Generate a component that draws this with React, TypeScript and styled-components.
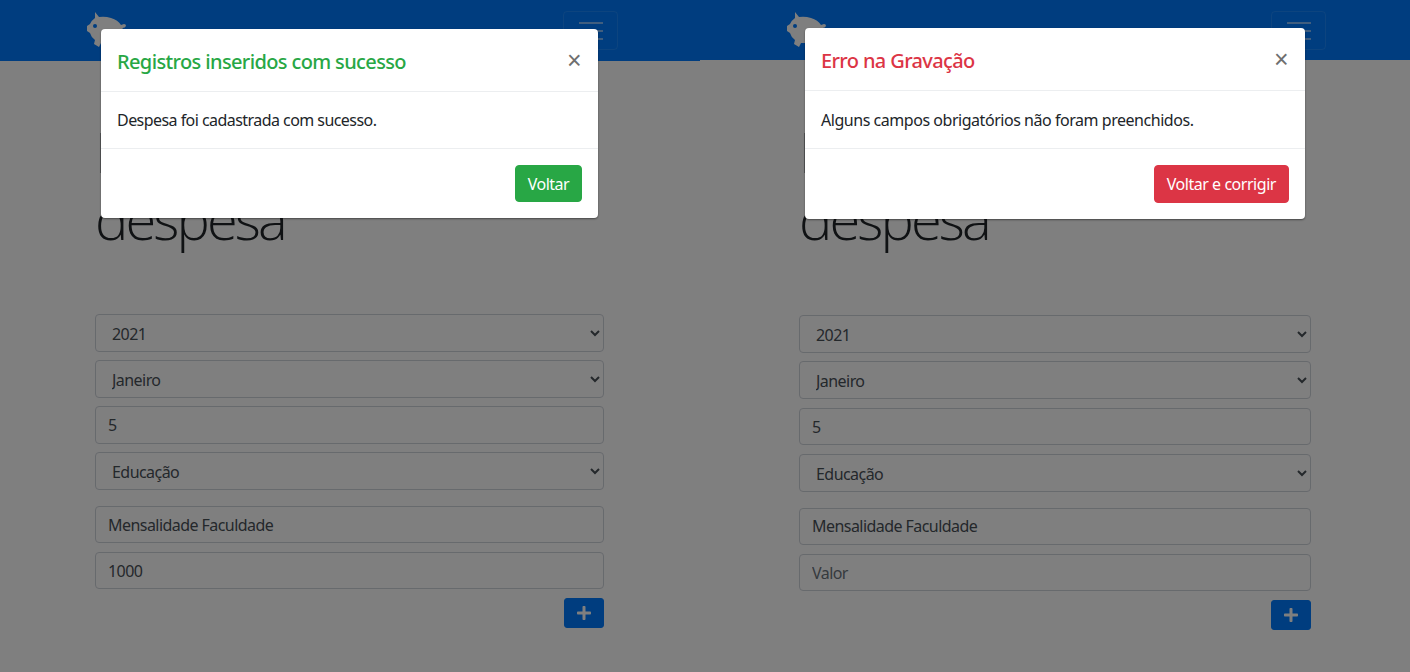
import * as React from 'react';
import styled, { createGlobalStyle } from 'styled-components';
import { FaPlus } from 'react-icons/fa';

const GlobalStyle = createGlobalStyle`
    html,
    body {
        margin: 0;
        padding: 0;
        background: #fff;
        overflow: hidden;
    }

    * {
        box-sizing: border-box;
    }
`;

const fontStack = `'Noto Sans', 'Open Sans', sans-serif`;

const Screens = styled.div`
    display: grid;
    grid-template-columns: 700px 710px;
    width: 1410px;
    height: 672px;
    font-family: ${fontStack};
    font-size: 16px;
    letter-spacing: -0.55px;
    color: #212529;
`;

const Screen = styled.section`
    position: relative;
    height: 672px;
    overflow: hidden;
`;

const Backdrop = styled.div`
    position: absolute;
    inset: 0;
    background: #000;
    opacity: 0.5;
`;

const NavBar = styled.nav<{ $pad: number; $height: number }>`
    display: flex;
    align-items: flex-start;
    justify-content: space-between;
    height: ${(p) => p.$height}px;
    padding: 11px ${(p) => p.$pad}px 0 86px;
    background: #007bff;
`;

const Logo = styled.svg`
    display: block;
    width: 41px;
    height: 38px;
`;

const Toggler = styled.button`
    display: flex;
    flex-direction: column;
    align-items: center;
    justify-content: center;
    gap: 6px;
    width: 55px;
    height: 39px;
    padding: 0;
    background: transparent;
    border: 1px solid rgba(255, 255, 255, 0.1);
    border-radius: 4px;
`;

const TogglerLine = styled.span`
    display: block;
    width: 24px;
    height: 2px;
    background: rgba(255, 255, 255, 0.5);
`;

const Content = styled.main<{ $left: number; $width: number }>`
    width: ${(p) => p.$width}px;
    margin-left: ${(p) => p.$left}px;
`;

const Heading = styled.h1<{ $top: number }>`
    margin: ${(p) => p.$top}px 0 0;
    font-family: 'Open Sans', sans-serif;
    font-size: 56px;
    font-weight: 300;
    line-height: 67px;
    letter-spacing: -2.9px;
`;

const Form = styled.form<{ $top: number; $gap: number }>`
    display: flex;
    flex-direction: column;
    gap: ${(p) => p.$gap}px;
    margin-top: ${(p) => p.$top}px;
`;

const fieldStyles = `
    display: block;
    width: 100%;
    height: 37.7px;
    background: #fff;
    border: 1px solid #ced4da;
    border-radius: 4px;
    font-family: ${fontStack};
    font-size: 16px;
    letter-spacing: -0.55px;
    color: #495057;
`;

const Select = styled.select`
    ${fieldStyles}
    padding: 2px 12px 0;
`;

const Input = styled.input<{ $spaced?: boolean }>`
    ${fieldStyles}
    padding: 0 12px;
    margin-top: ${(p) => (p.$spaced ? 7.5 : 0)}px;

    &::placeholder {
        color: #6c757d;
        opacity: 1;
    }
`;

const FormActions = styled.div`
    display: flex;
    justify-content: flex-end;
`;

const AddButton = styled.button`
    display: flex;
    align-items: center;
    justify-content: center;
    width: 40px;
    height: 30.5px;
    padding: 0;
    color: #fff;
    font-size: 16px;
    background: #007bff;
    border: 1px solid #007bff;
    border-radius: 3px;
`;

const Modal = styled.div<{ $left: number; $top: number; $width: number }>`
    position: absolute;
    left: ${(p) => p.$left}px;
    top: ${(p) => p.$top}px;
    width: ${(p) => p.$width}px;
    background: #fff;
    border-radius: 4px;
    box-shadow: 0 1px 2px rgba(0, 0, 0, 0.45);
`;

const ModalHeader = styled.header`
    display: flex;
    align-items: center;
    justify-content: space-between;
    height: 63px;
    padding: 0 17px 0 16px;
    border-bottom: 1px solid #eceef0;
`;

const ModalTitle = styled.h5<{ $color: string }>`
    margin: 0;
    padding-top: 3px;
    font-size: 20px;
    font-weight: 500;
    line-height: 30px;
    letter-spacing: -0.63px;
    color: ${(p) => p.$color};
`;

const CloseMark = styled.span`
    font-family: 'Liberation Sans', sans-serif;
    font-size: 25px;
    font-weight: 400;
    line-height: 1;
    color: #6f6f6f;
`;

const ModalBody = styled.div<{ $height: number; $tracking: number }>`
    height: ${(p) => p.$height}px;
    padding: ${(p) => p.$height - 41}px 16px 0;
    line-height: 24px;
    letter-spacing: ${(p) => p.$tracking}px;
    color: #212529;
    border-bottom: 1px solid #eceef0;
`;

const ModalFooter = styled.footer`
    display: flex;
    justify-content: flex-end;
    padding: 16px 16px 15.5px;
`;

const ModalButton = styled.button<{ $color: string; $height: number; $tracking: number }>`
    height: ${(p) => p.$height}px;
    padding: 0 12px;
    font-family: ${fontStack};
    font-size: 16px;
    letter-spacing: ${(p) => p.$tracking}px;
    color: #fff;
    background: ${(p) => p.$color};
    border: 1px solid ${(p) => p.$color};
    border-radius: 4px;
`;

const Piggy: React.FunctionComponent = () => (
    <Logo viewBox="0 0 41 38">
        <path
            fill="#fff"
            d="M9 1 L13 6 Q19 5 25 7 Q32 9 35 14 L38 13 Q40 13 40 15 Q39 17 36.5 17 Q38 22 36 28 L33 36 L27 36 L25 32 L15 32 L13 36 L8 33 L9 29 Q5 26 4 22 L1 20 L1 15 L4 13 Q6 9 9 7 Z"
        />
        <circle cx="9" cy="15" r="2" fill="#007bff" />
    </Logo>
);

interface ScreenProps {
    navHeight: number;
    navPad: number;
    left: number;
    width: number;
    headingTop: number;
    formTop: number;
    gap: number;
    value?: string;
    modal: { left: number; top: number; width: number };
    color: string;
    title: string;
    message: string;
    messageHeight: number;
    action: string;
    actionHeight: number;
    tracking: number;
}

const FormScreen: React.FunctionComponent<ScreenProps> = (props) => (
    <Screen>
        <NavBar $pad={props.navPad} $height={props.navHeight}>
            <Piggy />
            <Toggler type="button" aria-label="Menu">
                <TogglerLine />
                <TogglerLine />
                <TogglerLine />
            </Toggler>
        </NavBar>
        <Content $left={props.left} $width={props.width}>
            <Heading $top={props.headingTop}>Registro de nova despesa</Heading>
            <Form $top={props.formTop} $gap={props.gap}>
                <Select defaultValue="2021">
                    <option>2021</option>
                </Select>
                <Select defaultValue="Janeiro">
                    <option>Janeiro</option>
                </Select>
                <Input readOnly defaultValue="5" />
                <Select defaultValue="Educação">
                    <option>Educação</option>
                </Select>
                <Input $spaced readOnly defaultValue="Mensalidade Faculdade" />
                {props.value ? <Input readOnly defaultValue={props.value} /> : <Input readOnly placeholder="Valor" />}
                <FormActions>
                    <AddButton type="button" aria-label="Adicionar">
                        <FaPlus />
                    </AddButton>
                </FormActions>
            </Form>
        </Content>
        <Backdrop />
        <Modal $left={props.modal.left} $top={props.modal.top} $width={props.modal.width}>
            <ModalHeader>
                <ModalTitle $color={props.color}>{props.title}</ModalTitle>
                <CloseMark>×</CloseMark>
            </ModalHeader>
            <ModalBody $height={props.messageHeight} $tracking={props.tracking}>
                {props.message}
            </ModalBody>
            <ModalFooter>
                <ModalButton type="button" $color={props.color} $height={props.actionHeight} $tracking={props.tracking}>
                    {props.action}
                </ModalButton>
            </ModalFooter>
        </Modal>
    </Screen>
);

const App: React.FunctionComponent = () => (
    <>
        <GlobalStyle />
        <Screens>
            <FormScreen
                navHeight={60.7}
                navPad={82}
                left={95}
                width={509}
                headingTop={57.3}
                formTop={62.3}
                gap={8.3}
                value="1000"
                modal={{ left: 101, top: 29, width: 497 }}
                color="#28a745"
                title="Registros inseridos com sucesso"
                message="Despesa foi cadastrada com sucesso."
                messageHeight={57}
                action="Voltar"
                actionHeight={37}
                tracking={-0.55}
            />
            <FormScreen
                navHeight={60}
                navPad={84}
                left={99}
                width={512}
                headingTop={58}
                formTop={63.3}
                gap={8.5}
                modal={{ left: 105, top: 28, width: 500 }}
                color="#dc3545"
                title="Erro na Gravação"
                message="Alguns campos obrigatórios não foram preenchidos."
                messageHeight={58}
                action="Voltar e corrigir"
                actionHeight={38}
                tracking={-0.46}
            />
        </Screens>
    </>
);

export default App;
